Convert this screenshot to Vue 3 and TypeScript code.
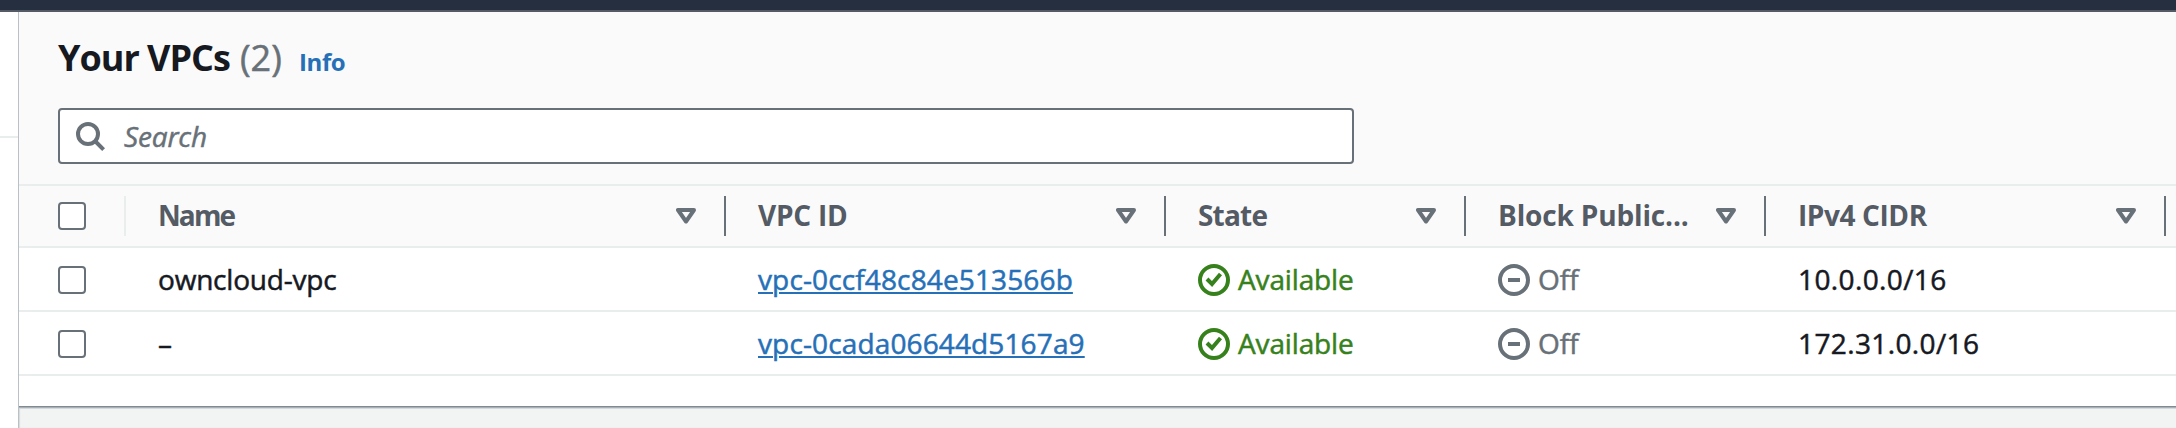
<script setup lang="ts">
interface Column {
  key: string
  label: string
}

interface Vpc {
  name: string
  id: string
  state: string
  block: string
  cidr: string
}

const columns: Column[] = [
  { key: 'name', label: 'Name' },
  { key: 'id', label: 'VPC ID' },
  { key: 'state', label: 'State' },
  { key: 'block', label: 'Block Public...' },
  { key: 'cidr', label: 'IPv4 CIDR' },
]

const vpcs: Vpc[] = [
  { name: 'owncloud-vpc', id: 'vpc-0ccf48c84e513566b', state: 'Available', block: 'Off', cidr: '10.0.0.0/16' },
  { name: '–', id: 'vpc-0cada06644d5167a9', state: 'Available', block: 'Off', cidr: '172.31.0.0/16' },
]
</script>

<template>
  <div class="page">
    <div class="topbar"></div>
    <div class="body">
      <aside class="side"><div class="side-line"></div></aside>
      <main class="main">
        <section class="panel">
          <header class="head">
            <div class="heading">
              <h1 class="title">Your VPCs</h1>
              <span class="count">(2)</span>
              <a class="info">Info</a>
            </div>
            <div class="search">
              <svg class="search-icon" viewBox="0 0 32 32" width="32" height="32" fill="none" stroke="#687078" stroke-width="4">
                <circle cx="14" cy="14" r="10" />
                <path d="M21 21l8.6 8.6" />
              </svg>
              <span class="placeholder">Search</span>
            </div>
          </header>
          <div class="row header-row">
            <div class="cell check"><span class="box"></span></div>
            <div v-for="c in columns" :key="c.key" class="cell th">
              <span :class="['label', 'label-' + c.key]">{{ c.label }}</span>
              <svg class="sort" viewBox="0 0 20 16" width="20" height="16" fill="none" stroke="#687078" stroke-width="4" stroke-linejoin="round">
                <path d="M2 2h16l-8 11.5z" />
              </svg>
            </div>
          </div>
          <div v-for="v in vpcs" :key="v.id" class="row">
            <div class="cell check"><span class="box"></span></div>
            <div class="cell"><span class="name">{{ v.name }}</span></div>
            <div class="cell"><a class="link">{{ v.id }}</a></div>
            <div class="cell status ok">
              <svg viewBox="0 0 32 32" width="32" height="32" fill="none" stroke="currentColor" stroke-width="4">
                <circle cx="16" cy="16" r="14" />
                <path d="M9 15l5 5 8.5-10" />
              </svg>
              <span class="avail">{{ v.state }}</span>
            </div>
            <div class="cell status off">
              <svg viewBox="0 0 32 32" width="32" height="32" fill="none" stroke="currentColor" stroke-width="4">
                <circle cx="16" cy="16" r="14" />
                <path d="M10 16h12" />
              </svg>
              <span class="offtext">{{ v.block }}</span>
            </div>
            <div class="cell"><span class="cidr">{{ v.cidr }}</span></div>
          </div>
        </section>
      </main>
    </div>
  </div>
</template>

<style>
body {
  margin: 0;
  overflow: hidden;
}
</style>

<style scoped>
.page {
  width: 2176px;
  height: 428px;
  overflow: hidden;
  display: flex;
  flex-direction: column;
  font-family: "Open Sans", "Noto Sans", sans-serif;
  font-size: 28px;
  line-height: 40px;
  color: #16191f;
  background: #fff;
}
.topbar {
  box-sizing: border-box;
  height: 12px;
  flex: none;
  background: #262f3f;
  border-bottom: 2px solid #545b64;
}
.body {
  flex: 1;
  display: flex;
}
.side {
  width: 18px;
  flex: none;
  padding-top: 124px;
}
.side-line {
  height: 2px;
  background: #eaeded;
}
.main {
  flex: 1;
  min-width: 0;
  background: #f2f3f3;
  box-shadow: inset 1px 0 0 #b9c1c4, inset 2px 0 1px #d5dbdb;
}
.panel {
  box-sizing: border-box;
  margin-left: 1px;
  height: 394px;
  background: #fff;
  box-shadow: 0 1px 0 #7f8a92, 0 2px 0 #a9b1b6, 0 3px 0 #d5d9db;
}
.head {
  box-sizing: border-box;
  height: 174px;
  padding: 21px 0 0 39px;
  background: #fafafa;
  border-bottom: 2px solid #eaeded;
}
.heading {
  display: flex;
  align-items: baseline;
  height: 50px;
  line-height: 50px;
  margin-bottom: 25px;
  white-space: nowrap;
}
.title {
  margin: 0;
  width: 182px;
  font-size: 36px;
  font-weight: 700;
  letter-spacing: -1px;
}
.count {
  width: 59px;
  font-size: 36px;
  color: #687078;
}
.info {
  font-size: 24px;
  font-weight: 700;
  letter-spacing: -0.4px;
  color: #2670b8;
}
.search {
  box-sizing: border-box;
  width: 1296px;
  height: 56px;
  display: flex;
  align-items: center;
  padding-left: 14px;
  background: #fff;
  border: 2px solid #687078;
  border-radius: 4px;
}
.search-icon {
  margin-right: 18px;
}
.placeholder {
  font-style: italic;
  letter-spacing: -0.15px;
  color: #687078;
}
.count,
.placeholder,
.name,
.link,
.avail,
.offtext,
.cidr {
  -webkit-text-stroke: 0.5px currentColor;
}
.row {
  box-sizing: border-box;
  height: 64px;
  display: grid;
  grid-template-columns: 107px 600px 440px 300px 300px 400px;
  border-bottom: 2px solid #eaeded;
}
.header-row {
  height: 62px;
  background: #fafafa;
}
.cell {
  box-sizing: border-box;
  display: flex;
  align-items: center;
  padding-left: 32px;
  white-space: nowrap;
}
.check {
  padding-left: 39px;
}
.box {
  box-sizing: border-box;
  width: 28px;
  height: 28px;
  margin-top: 2px;
  background: #fff;
  border: 2px solid #687078;
  border-radius: 4px;
}
.header-row .box {
  margin-top: 0;
}
.header-row .cell {
  height: 40px;
  margin-top: 10px;
  border-right: 2px solid #687078;
}
.header-row .check {
  border-right-color: #eaeded;
}
.th {
  justify-content: space-between;
  padding-right: 28px;
  font-weight: 700;
  color: #545b64;
}
.label {
  margin-top: -2px;
}
.label-name {
  letter-spacing: -1.9px;
}
.label-id {
  letter-spacing: -0.25px;
}
.label-state {
  letter-spacing: -0.8px;
}
.label-block {
  letter-spacing: -0.15px;
}
.label-cidr {
  letter-spacing: -0.4px;
}
.name {
  letter-spacing: -0.2px;
}
.link {
  letter-spacing: 0.13px;
  color: #2670b8;
  text-decoration: underline;
  text-decoration-thickness: 2px;
  text-underline-offset: 2px;
}
.avail {
  letter-spacing: -0.15px;
}
.cidr {
  letter-spacing: 0.38px;
}
.status {
  gap: 8px;
}
.status svg {
  margin-top: 2px;
}
.ok {
  color: #37811c;
}
.off {
  color: #687078;
}
</style>
